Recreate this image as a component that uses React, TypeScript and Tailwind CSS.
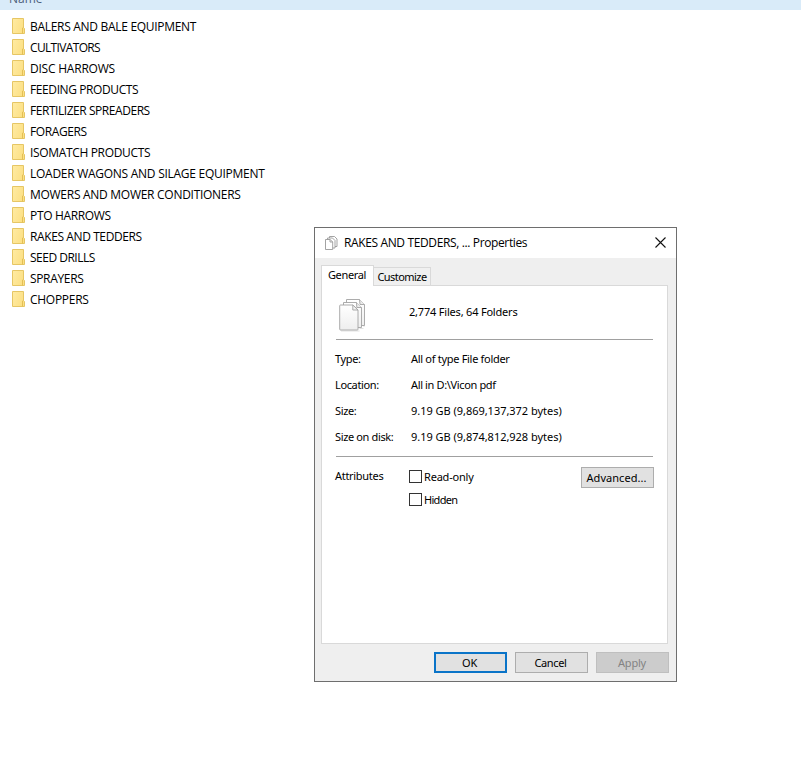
import { useState } from 'react'
import type { ReactNode } from 'react'

const folders = [
  { name: 'BALERS AND BALE EQUIPMENT', tracking: 'tracking-[-0.3px]' },
  { name: 'CULTIVATORS', tracking: 'tracking-[-0.65px]' },
  { name: 'DISC HARROWS', tracking: 'tracking-[-0.22px]' },
  { name: 'FEEDING PRODUCTS', tracking: 'tracking-[-0.4px]' },
  { name: 'FERTILIZER SPREADERS', tracking: 'tracking-[-0.45px]' },
  { name: 'FORAGERS', tracking: 'tracking-[-0.4px]' },
  { name: 'ISOMATCH PRODUCTS', tracking: 'tracking-[-0.34px]' },
  { name: 'LOADER WAGONS AND SILAGE EQUIPMENT', tracking: 'tracking-[-0.27px]' },
  { name: 'MOWERS AND MOWER CONDITIONERS', tracking: 'tracking-[-0.28px]' },
  { name: 'PTO HARROWS', tracking: 'tracking-[-0.34px]' },
  { name: 'RAKES AND TEDDERS', tracking: 'tracking-[-0.4px]' },
  { name: 'SEED DRILLS', tracking: 'tracking-[-0.5px]' },
  { name: 'SPRAYERS', tracking: 'tracking-[-0.34px]' },
  { name: 'CHOPPERS', tracking: 'tracking-[-0.28px]' },
]

const details = [
  { label: 'Type:', value: 'All of type File folder', tracking: 'tracking-[-0.3px]' },
  { label: 'Location:', value: 'All in D:\\Vicon pdf', tracking: 'tracking-[-0.36px]' },
  { label: 'Size:', value: '9.19 GB (9,869,137,372 bytes)', tracking: 'tracking-[-0.03px]' },
  { label: 'Size on disk:', value: '9.19 GB (9,874,812,928 bytes)', tracking: 'tracking-[-0.03px]' },
]

function FolderIcon() {
  return (
    <svg width="13" height="16" viewBox="0 0 13 16" className="mb-px shrink-0">
      <defs>
        <linearGradient id="folder" x1="0" y1="0" x2="1" y2="0.4">
          <stop offset="0" stopColor="#ffeba3" />
          <stop offset="1" stopColor="#fce085" />
        </linearGradient>
      </defs>
      <path d="M.5.5h11v9.2l1 .8v5H.5z" fill="url(#folder)" stroke="#e6c664" />
      <path d="M10.5 15.5V10l1-.6" fill="none" stroke="#e3bf55" />
    </svg>
  )
}

function PagesIcon({ small }: { small?: boolean }) {
  if (small) {
    return (
      <svg width="13" height="14" viewBox="0 0 13 14" fill="#fff" stroke="#999" strokeWidth="0.9">
        <path d="M4.5.5h5l2.5 2.5v7.5H4.5z" />
        <path d="M2.5 2h5L10 4.5V12H2.5z" />
        <path d="M.5 3.5h4.7L7.7 6v7.5H.5z" />
        <path d="M5 3.5V6h2.7" fill="none" />
      </svg>
    )
  }
  return (
    <svg width="28" height="33" viewBox="0 0 28 33" stroke="#a3a3a3" strokeWidth="0.9">
      <defs>
        <linearGradient id="page" x1="0" y1="0" x2="0" y2="1">
          <stop offset="0" stopColor="#fff" />
          <stop offset="1" stopColor="#eee" />
        </linearGradient>
      </defs>
      <path d="M2 32h18.5M20.5 29.5h4M24 27h2" stroke="#dedede" />
      <path d="M7.5.5h13l5 5v21h-18z" fill="url(#page)" />
      <path d="M20.5.5l.5 5h4.5" fill="#ececec" />
      <path d="M4.5 3.5h13l5 5v20h-18z" fill="url(#page)" />
      <path d="M17.5 3.5l.3 5h4.7" fill="#ececec" />
      <path d="M1.5 6h12.3l5.2 5v19.3q0 .7-.7.7H1.5q-.8 0-.8-.8V6.8q0-.8.8-.8z" fill="url(#page)" />
      <path d="M13.8 6v5H19z" fill="#f4f4f4" />
    </svg>
  )
}

function CheckRow({ children }: { children: ReactNode }) {
  const [checked, setChecked] = useState(false)

  return (
    <label className="flex h-[23px] items-center">
      <input
        type="checkbox"
        checked={checked}
        onChange={(e) => setChecked(e.target.checked)}
        className="mr-[2px] h-[13px] w-[13px] shrink-0 appearance-none border border-[#333] bg-white checked:bg-[#0078d7]"
      />
      {children}
    </label>
  )
}

function PropertiesDialog() {
  return (
    <div
      role="dialog"
      className="absolute left-[314px] top-[227px] flex h-[455px] w-[363px] flex-col border border-[#6e6e6e] bg-[#efefef] font-['Noto_Sans',sans-serif] text-[11px] leading-[14px] tracking-[-0.2px] whitespace-nowrap text-black"
    >
      <div className="flex h-[30px] shrink-0 items-center bg-white pr-[10px] pl-[10px]">
        <PagesIcon small />
        <span className="ml-[6px] flex-1 font-['Open_Sans',sans-serif] text-[12px] tracking-[-0.37px]">
          RAKES AND TEDDERS, ... Properties
        </span>
        <button type="button" aria-label="Close" className="-mt-[2px]">
          <svg width="11" height="11" viewBox="0 0 11 11" stroke="#111" strokeWidth="1.1">
            <path d="M.5.5l10 10M10.5.5l-10 10" />
          </svg>
        </button>
      </div>

      <div className="mt-[7px] flex h-5 shrink-0 items-end pl-[6px]">
        <div className="relative z-10 -mb-px flex h-[21px] w-[53px] items-center justify-center border border-b-0 border-[#d9d9d9] bg-white pr-px pb-[2px] tracking-[-0.35px]">
          General
        </div>
        <div className="-ml-px flex h-[18px] w-[58px] items-center justify-center border border-b-0 border-[#d9d9d9] bg-[#f0f0f0] pt-px tracking-[-0.55px]">
          Customize
        </div>
      </div>

      <div className="mr-[8px] ml-[6px] flex h-[359px] shrink-0 flex-col border border-[#d9d9d9] bg-white pr-[14px] pl-[14px]">
        <div className="flex h-[54px] shrink-0 items-start border-b border-[#a0a0a0] pt-[13px] pl-[3px]">
          <PagesIcon />
          <span className="mt-[6px] ml-[42px]">2,774 Files, 64 Folders</span>
        </div>

        <dl className="flex h-[117px] shrink-0 flex-col border-b border-[#a0a0a0] pt-[6px]">
          {details.map((d) => (
            <div key={d.label} className="-ml-px flex h-[26px] items-center">
              <dt className="w-[76px] tracking-[-0.36px]">{d.label}</dt>
              <dd className={d.tracking}>{d.value}</dd>
            </div>
          ))}
        </dl>

        <div className="flex pt-[8px]">
          <span className="mt-[4px] -ml-px w-[74px] tracking-[-0.3px]">Attributes</span>
          <div className="flex-1">
            <CheckRow>Read-only</CheckRow>
            <CheckRow>
              <span className="tracking-[-0.7px]">Hidden</span>
            </CheckRow>
          </div>
          <button
            type="button"
            className="mt-[2px] -mr-px h-[21px] w-[73px] border border-[#adadad] bg-[#e1e1e1] pr-[2px] tracking-[0.05px]"
          >
            Advanced...
          </button>
        </div>
      </div>

      <div className="mt-[8px] flex justify-end gap-2 pr-[7px]">
        <button type="button" className="h-[21px] w-[73px] border-2 border-[#0a74c8] bg-[#e1e1e1] pr-[2px]">
          OK
        </button>
        <button
          type="button"
          className="h-[21px] w-[73px] border border-[#adadad] bg-[#e1e1e1] pr-[2px] tracking-[-0.35px]"
        >
          Cancel
        </button>
        <button
          type="button"
          disabled
          className="h-[21px] w-[73px] border border-[#bfbfbf] bg-[#cccccc] pr-px text-[#838383]"
        >
          Apply
        </button>
      </div>
    </div>
  )
}

export default function App() {
  return (
    <div className="relative h-[772px] w-[801px] overflow-hidden bg-white font-['Open_Sans',sans-serif] text-[12px] text-black">
      <header className="flex h-[10px] items-end bg-[#d9ebf9] pl-[9px]">
        <span className="mb-[3px] leading-4 text-[#4c607a]">Name</span>
      </header>

      <ul className="pt-[6px] pl-[12px]">
        {folders.map((f) => (
          <li key={f.name} className="flex h-[21px] items-center gap-[5px]">
            <FolderIcon />
            <span className={`leading-4 whitespace-nowrap ${f.tracking}`}>{f.name}</span>
          </li>
        ))}
      </ul>

      <PropertiesDialog />
    </div>
  )
}
